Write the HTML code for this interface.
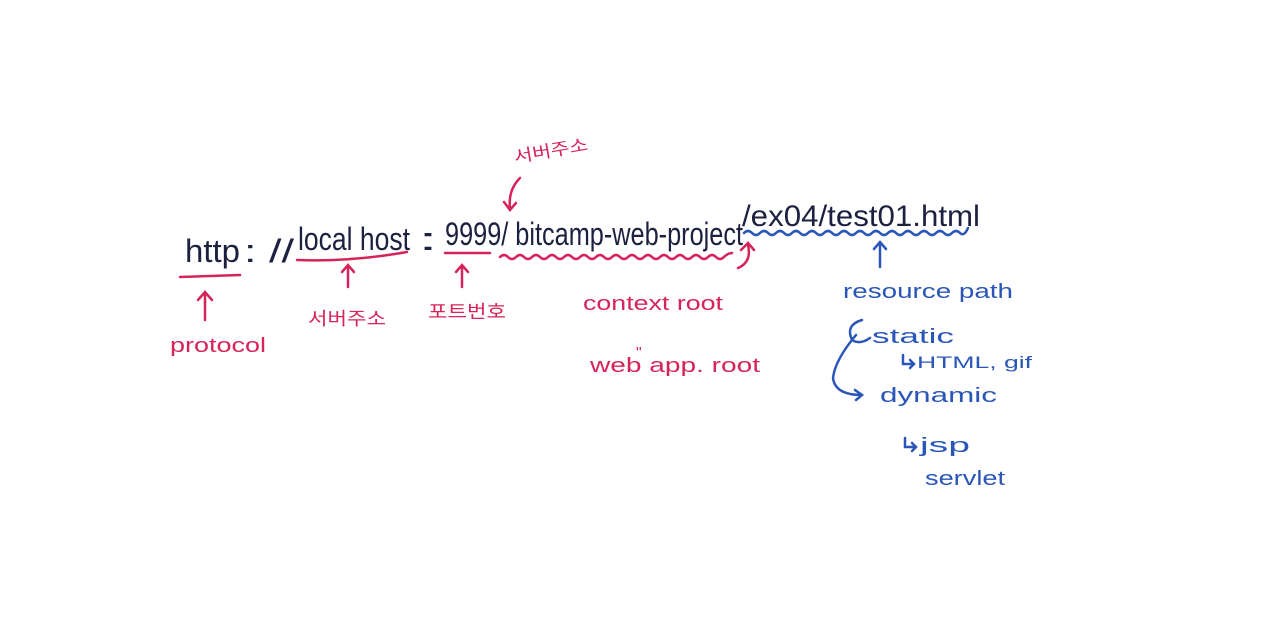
<!DOCTYPE html>
<html><head><meta charset="utf-8"><style>
html,body{margin:0;padding:0;background:#fff;width:1280px;height:635px;overflow:hidden}
svg text{font-family:"Liberation Sans","Noto Sans CJK KR",sans-serif}
</style></head><body>
<svg width="1280" height="635" viewBox="0 0 1280 635" xmlns="http://www.w3.org/2000/svg">
<g fill="#1c2140" font-size="32">
<text x="185" y="262" textLength="55" lengthAdjust="spacingAndGlyphs">http</text>
<text x="244" y="262" textLength="50" lengthAdjust="spacingAndGlyphs">: //</text>
<text x="298" y="250" textLength="112" lengthAdjust="spacingAndGlyphs">local host</text>
<text x="418" y="250" textLength="20" lengthAdjust="spacingAndGlyphs">:</text>
<text x="445" y="245" textLength="298" lengthAdjust="spacingAndGlyphs">9999/ bitcamp-web-project</text>
<text x="742" y="226" font-size="30" textLength="238" lengthAdjust="spacingAndGlyphs">/ex04/test01.html</text>
</g>
<g stroke="#d6245a" stroke-width="2.5" fill="none" stroke-linecap="round">
<path d="M180 277 L240 275"/>
<path d="M297 260 Q350 262 407 252"/>
<path d="M445 253 L490 253"/>
<path d="M500 257 q4-4 8 0 t8 0 t8 0 t8 0 t8 0 t8 0 t8 0 t8 0 t8 0 t8 0 t8 0 t8 0 t8 0 t8 0 t8 0 t8 0 t8 0 t8 0 t8 0 t8 0 t8 0 t8 0 t8 0 t8 0 t8 0 t8 0 t8 0 t8 0 t8 -4"/>
<path d="M738 268 Q752 262 748 245 M741 250 L748 243 L754 250"/>
<path d="M205 320 L205 292 M198 300 L205 292 L212 300"/>
<path d="M348 287 L348 265 M342 272 L348 265 L354 272"/>
<path d="M462 287 L462 265 M456 272 L462 265 L468 272"/>
<path d="M520 178 Q508 190 510 208 M504 202 L510 210 L516 203"/>
</g>
<g stroke="#2a56b8" stroke-width="2.5" fill="none" stroke-linecap="round">
<path d="M744 233 q4-4 8 0 t8 0 t8 0 t8 0 t8 0 t8 0 t8 0 t8 0 t8 0 t8 0 t8 0 t8 0 t8 0 t8 0 t8 0 t8 0 t8 0 t8 0 t8 0 t8 0 t8 0 t8 0 t8 0 t8 0 t8 0 t8 0 t8 0 t8 -5"/>
<path d="M880 267 L880 242 M874 249 L880 242 L886 249"/>
<path d="M862 320 Q845 325 852 340 Q860 345 870 338"/>
<path d="M856 335 Q835 360 833 378 Q835 395 862 395 M855 390 L862 395 L856 400"/>
<path d="M903 355 L903 364 L913 364 M910 360 L914 364 L910 368"/>
<path d="M905 438 L905 447 L915 447 M912 443 L916 447 L912 451"/>
</g>
<g fill="#d6245a" font-size="20">
<text x="515" y="163" font-size="17" transform="rotate(-10 515 163)" textLength="75" lengthAdjust="spacingAndGlyphs">서버주소</text>
<text x="170" y="352" textLength="96" lengthAdjust="spacingAndGlyphs">protocol</text>
<text x="308" y="325" font-size="18" textLength="78" lengthAdjust="spacingAndGlyphs">서버주소</text>
<text x="428" y="318" font-size="18" textLength="78" lengthAdjust="spacingAndGlyphs">포트번호</text>
<text x="583" y="310" textLength="140" lengthAdjust="spacingAndGlyphs">context root</text>
<text x="636" y="358" font-size="16">"</text>
<text x="590" y="372" textLength="170" lengthAdjust="spacingAndGlyphs">web app. root</text>
</g>
<g fill="#2a56b8" font-size="20">
<text x="843" y="298" textLength="170" lengthAdjust="spacingAndGlyphs">resource path</text>
<text x="872" y="343" textLength="82" lengthAdjust="spacingAndGlyphs">static</text>
<text x="917" y="368" font-size="17" textLength="115" lengthAdjust="spacingAndGlyphs">HTML, gif</text>
<text x="880" y="402" textLength="117" lengthAdjust="spacingAndGlyphs">dynamic</text>
<text x="920" y="452" textLength="50" lengthAdjust="spacingAndGlyphs">jsp</text>
<text x="925" y="485" textLength="80" lengthAdjust="spacingAndGlyphs">servlet</text>
</g>
</svg>
</body></html>
